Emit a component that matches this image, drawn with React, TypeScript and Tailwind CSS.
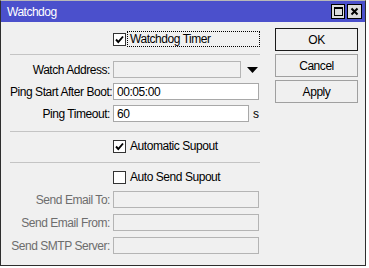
import React from "react";

const font = { fontFamily: "'Liberation Sans', Arial, sans-serif" };

function Check({ checked }: { checked?: boolean }) {
  return (
    <span className="flex h-[13px] w-[13px] shrink-0 items-center justify-center border border-[#333] bg-white">
      {checked && (
        <svg width="9" height="9" viewBox="0 0 9 9">
          <path d="M1 4.5 L3.3 7 L8 1.5" fill="none" stroke="#000" strokeWidth="1.9" />
        </svg>
      )}
    </span>
  );
}

function Field({
  label,
  value,
  disabled,
  dim,
  width = "w-[146px]",
  children,
}: {
  label: string;
  value?: string;
  disabled?: boolean;
  dim?: boolean;
  width?: string;
  children?: React.ReactNode;
}) {
  return (
    <div className="flex h-[17px] items-center">
      <div className={`w-[101px] whitespace-nowrap pr-[1px] text-right ${dim ? "text-[#6d6d6d]" : "text-black"}`}>
        {label}
      </div>
      <div
        className={`ml-[2px] flex h-[17px] items-center border px-[3px] ${width} ${
          disabled ? "border-[#b4b4b4] bg-[#f0f0f0]" : "border-[#a8a8a8] bg-white"
        }`}
      >
        {value}
      </div>
      {children}
    </div>
  );
}

function Btn({ label, focus }: { label: string; focus?: boolean }) {
  return (
    <div
      className={`flex h-[23px] w-[83px] items-center justify-center bg-[#f0f0f0] text-black ${
        focus ? "border border-[#1a1a1a]" : "border border-[#a0a0a0]"
      }`}
    >
      {label}
    </div>
  );
}

export default function App() {
  return (
    <div className="h-[268px] w-[369px] bg-white" style={font}>
      <div className="flex h-[266px] w-[366px] flex-col border-x border-b border-t border-[#2e2e2e] border-t-[#b8b8b8] bg-[#f0f0f0] text-[12px] tracking-[-0.45px]">
        {/* title bar */}
        <div className="flex h-[21px] shrink-0 items-center bg-[#4b50cc] pl-[6px] pr-[3px]">
          <span className="text-[12px] tracking-[-0.5px] text-white">Watchdog</span>
          <div className="ml-auto flex gap-[2px]">
            <div className="flex h-[15px] w-[14px] items-center justify-center border border-black bg-[#dcdcdc]">
              <span className="h-[9px] w-[9px] border border-t-2 border-black" />
            </div>
            <div className="flex h-[15px] w-[15px] items-center justify-center border border-black bg-[#dcdcdc]">
              <svg width="9" height="9" viewBox="0 0 9 9">
                <path d="M1.5 1.5 L7.5 7.5 M7.5 1.5 L1.5 7.5" stroke="#000" strokeWidth="2" />
              </svg>
            </div>
          </div>
        </div>

        <div className="flex flex-1">
          {/* form */}
          <div className="w-[259px] pl-[9px]">
            <div className="mt-[9px] flex h-[16px] items-center pl-[103px]">
              <Check checked />
              <span className="ml-[1px] flex h-[16px] flex-1 items-center border border-dotted border-black pl-[2px]">
                Watchdog Timer
              </span>
            </div>
            <div className="mt-[7px] h-px bg-[#c4c4c4]" />

            <div className="mt-[6px] flex flex-col gap-[5px]">
              <Field label="Watch Address:" disabled width="w-[128px]">
                <svg className="ml-[6px]" width="11" height="6" viewBox="0 0 11 6">
                  <path d="M0 0 H11 L5.5 6 Z" fill="#000" />
                </svg>
              </Field>
              <Field label="Ping Start After Boot:" value="00:05:00" />
              <Field label="Ping Timeout:" value="60" width="w-[136px]">
                <span className="ml-[4px]">s</span>
              </Field>
            </div>

            <div className="mt-[9px] h-px bg-[#c4c4c4]" />
            <div className="mt-[6px] flex h-[16px] items-center gap-[4px] pl-[103px]">
              <Check checked />
              <span>Automatic Supout</span>
            </div>
            <div className="mt-[8px] h-px bg-[#c4c4c4]" />
            <div className="mt-[6px] flex h-[16px] items-center gap-[4px] pl-[103px]">
              <Check />
              <span>Auto Send Supout</span>
            </div>

            <div className="mt-[6px] flex flex-col gap-[6px]">
              <Field label="Send Email To:" disabled dim />
              <Field label="Send Email From:" disabled dim />
              <Field label="Send SMTP Server:" disabled dim />
            </div>
          </div>

          {/* buttons */}
          <div className="ml-[15px] mt-[6px] flex flex-col gap-[3px]">
            <Btn label="OK" focus />
            <Btn label="Cancel" />
            <Btn label="Apply" />
          </div>
        </div>
      </div>
    </div>
  );
}
